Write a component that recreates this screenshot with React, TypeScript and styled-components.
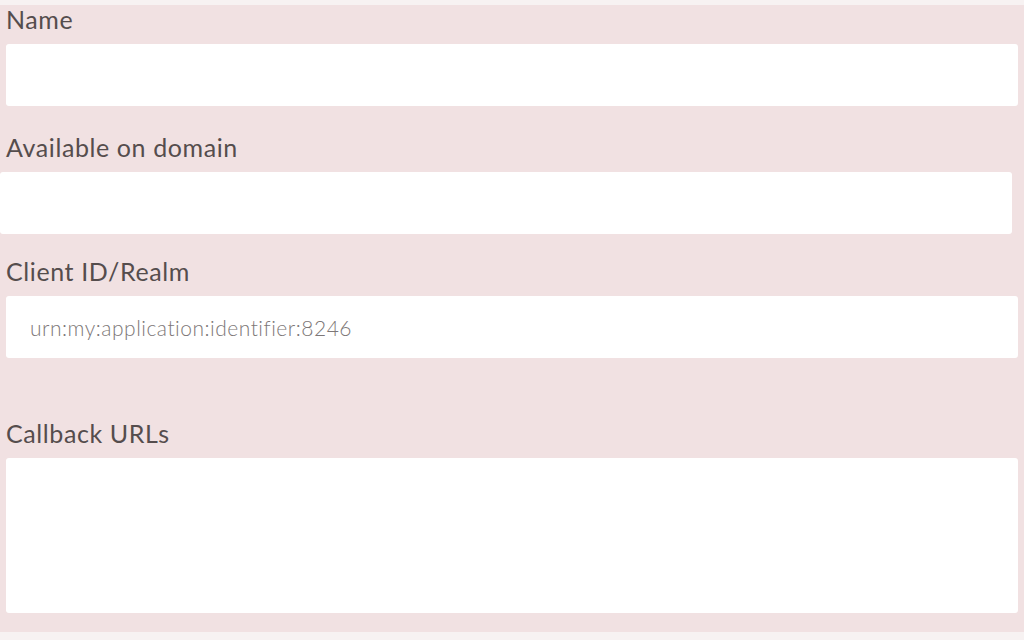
import React from "react";
import styled, { createGlobalStyle } from "styled-components";

const Global = createGlobalStyle`
  html, body { margin: 0; padding: 0; background: #f7f2f2; }
  body { font-family: "Lato", "Open Sans", sans-serif; }
  * { box-sizing: border-box; }
`;

const Panel = styled.form`
  margin-top: 5px;
  height: 627px;
  background: #f1e1e2;
  padding: 0 6px;
  display: flex;
  flex-direction: column;
`;

const Field = styled.div<{ $gap: number; $shift?: number }>`
  display: flex;
  flex-direction: column;
  margin-top: ${(p) => p.$gap}px;
  margin-left: ${(p) => -(p.$shift || 0)}px;
  margin-right: ${(p) => p.$shift || 0}px;
`;

const Label = styled.label<{ $shift?: number }>`
  font-size: 25px;
  letter-spacing: 0.6px;
  line-height: 28px;
  color: #554d4d;
  margin-bottom: 11px;
  margin-left: ${(p) => p.$shift || 0}px;
`;

const Input = styled.input`
  height: 62px;
  width: 100%;
  border: none;
  border-radius: 3px;
  background: #ffffff;
  padding: 0 24px;
  font-family: "Lato", "Open Sans", sans-serif;
  font-size: 21px;
  letter-spacing: 0.5px;
  color: #4b4545;
  outline: none;
  &::placeholder { color: #7d7777; font-weight: 300; }
`;

const Area = styled.textarea`
  height: 155px;
  width: 100%;
  border: none;
  border-radius: 3px;
  background: #ffffff;
  resize: none;
  outline: none;
  padding: 12px 24px;
  font-family: "Lato", "Open Sans", sans-serif;
  font-size: 21px;
`;

export default function App() {
  return (
    <>
      <Global />
      <Panel onSubmit={(e) => e.preventDefault()}>
        <Field $gap={0}>
          <Label>Name</Label>
          <Input />
        </Field>
        <Field $gap={27} $shift={6}>
          <Label $shift={6}>Available on domain</Label>
          <Input />
        </Field>
        <Field $gap={23}>
          <Label>Client ID/Realm</Label>
          <Input placeholder="urn:my:application:identifier:8246" />
        </Field>
        <Field $gap={61}>
          <Label>Callback URLs</Label>
          <Area />
        </Field>
      </Panel>
    </>
  );
}
